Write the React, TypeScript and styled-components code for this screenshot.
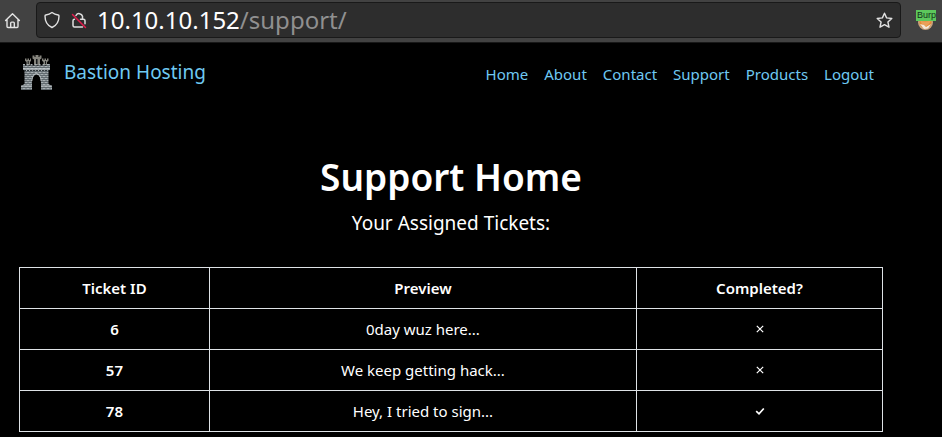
import React from "react";
import styled, { createGlobalStyle } from "styled-components";

const GlobalStyle = createGlobalStyle`
  * { box-sizing: border-box; }
  html, body { margin: 0; background: #000; }
  body {
    color: #fff;
    font-family: "Noto Sans", "Open Sans", sans-serif;
    font-size: 15px;
    line-height: 24px;
    overflow: hidden;
  }
`;

const Toolbar = styled.div`
  display: flex;
  align-items: center;
  height: 43px;
  padding: 0 5px 2px 4px;
  background: #424242;
  border-bottom: 1px solid #181818;
`;

const IconButton = styled.button`
  display: flex;
  padding: 0;
  border: 0;
  background: none;
  color: #e4e4e4;
`;

const AddressBar = styled.div`
  display: flex;
  flex: 1;
  align-items: center;
  gap: 11px;
  height: 36px;
  margin: 0 14px 0 15px;
  padding: 0 7px;
  border: 1px solid #191919;
  border-radius: 4px;
  background: #2d2d2d;
`;

const Address = styled.div`
  flex: 1;
  margin-left: -1px;
  font-size: 24px;
  line-height: 32px;
  color: #909090;
`;

const Host = styled.span`
  color: #fff;
`;

const Extension = styled.button`
  position: relative;
  width: 22px;
  height: 24px;
  padding: 0;
  border: 0;
  background: none;
`;

const FoxArt = styled.svg`
  position: absolute;
  left: 2px;
  top: 7px;
`;

const ExtensionLabel = styled.span`
  position: absolute;
  inset: 2px 1px auto 1px;
  height: 11px;
  padding-left: 1px;
  background: #5cc85c;
  color: #14301a;
  font: 9px/11px "Liberation Sans", sans-serif;
  text-align: left;
`;

const Page = styled.div`
  padding: 0 59px 5px 19px;
`;

const Header = styled.header`
  display: flex;
  align-items: center;
  justify-content: space-between;
  height: 58px;
  padding: 0 9px 0 0;
`;

const Brand = styled.a`
  display: flex;
  align-items: center;
  gap: 10px;
  color: #6fc9f2;
  font-size: 19px;
  text-decoration: none;
`;

const Nav = styled.nav`
  display: flex;
  gap: 16px;
  padding-top: 4px;
`;

const NavLink = styled.a`
  color: #6fc9f2;
  text-decoration: none;
`;

const Title = styled.h1`
  margin: 52px 0 8px;
  font-size: 37px;
  line-height: 48px;
  font-weight: 600;
  text-align: center;
`;

const Subtitle = styled.p`
  margin: 0 0 30px;
  font-size: 19px;
  line-height: 28px;
  text-align: center;
`;

const Table = styled.table`
  width: 100%;
  border-collapse: collapse;
  table-layout: fixed;
  text-align: center;
`;

const Column = styled.col<{ $share: number }>`
  width: ${({ $share }) => $share}%;
`;

const Cell = styled.td`
  height: 41px;
  padding: 8px;
  border: 1px solid #dee2e6;
`;

const HeadCell = styled.th`
  height: 41px;
  padding: 8px;
  border: 1px solid #dee2e6;
  font-weight: 600;
`;

const Mark = styled.svg`
  display: block;
  margin: 0 auto;
`;

const HomeIcon = () => (
  <svg width="17" height="17" viewBox="0 0 17 17" fill="none" stroke="currentColor" strokeWidth="1.4" strokeLinejoin="round" strokeLinecap="round">
    <path d="M1.6 8.4 8.5 1.7l6.900 6.700M3 7.200v7.300q0 1 1 1h9q1 0 1-1V7.200M6.700 15.300v-4.200q0-1 1-1h1.600q1 0 1 1v4.200" />
  </svg>
);

const ShieldIcon = () => (
  <svg width="16" height="18" viewBox="0 0 16 18" fill="none" stroke="#e2e2e2" strokeWidth="1.4" strokeLinejoin="round">
    <path d="M8 1.500c2 1.400 4 2.100 6.200 2.500.6.1.8.4.8.9 0 5.300-2 9.300-7 11.600C3 14.200 1 10.200 1 4.900c0-.5.2-.8.8-.9C4 3.600 6 2.900 8 1.500Z" />
  </svg>
);

const InsecureIcon = () => (
  <svg width="16" height="18" viewBox="0 0 16 18" fill="none" stroke="#dedede" strokeWidth="1.5" strokeLinecap="round">
    <path d="M5 4.500a3.500 3.500 0 0 1 6.500.8V8M9.500 8.200h3q1.500 0 1.500 1.500v3M3.500 8.200Q2 8.200 2 9.700v4.800Q2 16 3.500 16h8" />
    <path d="m1.500 3.500 13 13" stroke="#e01b4c" strokeWidth="1.500" />
  </svg>
);

const StarIcon = () => (
  <svg width="17" height="17" viewBox="0 0 17 17" fill="none" stroke="#e2e2e2" strokeWidth="1.4" strokeLinejoin="round">
    <path d="m8.500 1.200 2.100 4.700 5.200.6-3.900 3.500 1.100 5.200-4.500-2.600L4 15.200 5.100 10 1.200 6.500l5.200-.6Z" />
  </svg>
);

const Castle = () => (
  <svg width="35" height="37" viewBox="0 0 35 37" aria-hidden="true">
    <defs>
      <pattern id="bricks" width="4" height="4" patternUnits="userSpaceOnUse">
        <rect width="4" height="4" fill="#a9b0b3" />
        <path d="M0 1.500h4M0 3.500h4M1 0v1.500M3 1.500v2" stroke="#495157" strokeWidth=".7" />
      </pattern>
    </defs>
    <path fill="#85847d" d="M13.500 1.500h2v1.500h1V1h3v2h1V1.500h2v3l-1.500 1V11h-6V5.500l-1.500-1ZM6 4.500h1.500V6h1V4.500h1.500V6h1V4.500H12v2.300L11 8v3H7.500V8L6 6.800ZM23 4.500h1.500V6h1V4.500H27V6h1V4.500h1.500v2.300L28 8v3h-3.500V8L23 6.800Z" />
    <path d="M17 5h1.500v5H17ZM8.700 7h1v3h-1ZM26 7h1v3h-1Z" fill="#171a1c" />
    <path fill="url(#bricks)" d="M4 10h2v1.500h1.500V10h2v1.500h2V10h2v1.500h2V10h2v1.500h2V10h2v1.500h2V10h2v1.500h2V10h2v1.500H29V10h2v5l-1.500 2v13l3.500 2v4H22v-7c0-11-9-11-9 0v7H2v-4l3.500-2V17L4 15Z" />
    <path d="M4 15h27" stroke="#d4dadd" strokeWidth="1" />
    <path d="M2 32h11M22 32h11M12.800 27c1-10 8.400-10 9.400 0" fill="none" stroke="#c0c6c9" strokeWidth=".8" />
    <path d="M5 16.500h25" stroke="#30373b" strokeWidth="1" strokeDasharray="2 1" />
  </svg>
);

const StatusMark = ({ done }: { done: boolean }) => (
  <Mark width="10" height="10" viewBox="0 0 10 10" fill="none" stroke="#fff" strokeWidth={done ? 1.7 : 1.2} role="img" aria-label={done ? "Yes" : "No"}>
    <path d={done ? "M1.200 5.200 4 7.800l4.800-5.300" : "m1.800 1.800 6.400 6.400m0-6.400-6.400 6.400"} />
  </Mark>
);

const links = ["Home", "About", "Contact", "Support", "Products", "Logout"];

const tickets = [
  { id: 6, preview: "0day wuz here...", done: false },
  { id: 57, preview: "We keep getting hack...", done: false },
  { id: 78, preview: "Hey, I tried to sign...", done: true },
];

export default function App() {
  return (
    <>
      <GlobalStyle />
      <Toolbar>
        <IconButton aria-label="Home page"><HomeIcon /></IconButton>
        <AddressBar>
          <IconButton aria-label="Tracking protection"><ShieldIcon /></IconButton>
          <IconButton aria-label="Connection is not secure"><InsecureIcon /></IconButton>
          <Address><Host>10.10.10.152</Host>/support/</Address>
          <IconButton aria-label="Bookmark this page"><StarIcon /></IconButton>
        </AddressBar>
        <Extension aria-label="Proxy profile">
          <FoxArt width="17" height="16" viewBox="0 0 17 16">
            <circle cx="8.500" cy="7.500" r="7.500" fill="#c9a27c" />
            <circle cx="8.500" cy="7" r="6" fill="#e58a32" />
            <path d="M3 5.500q5 2 11 0l-2 3.500-3 2.500L5 9Z" fill="#e9a05a" />
            <path d="m3 9 4 1 2 2 5-3-3 4.500-4 .500Z" fill="#f4e8da" />
          </FoxArt>
          <ExtensionLabel>Burp</ExtensionLabel>
        </Extension>
      </Toolbar>
      <Page>
        <Header>
          <Brand href="#"><Castle />Bastion Hosting</Brand>
          <Nav>
            {links.map((link) => <NavLink href="#" key={link}>{link}</NavLink>)}
          </Nav>
        </Header>
        <main>
          <Title>Support Home</Title>
          <Subtitle>Your Assigned Tickets:</Subtitle>
          <Table>
            <colgroup>
              <Column $share={22} />
              <Column $share={49.5} />
              <Column $share={28.5} />
            </colgroup>
            <thead>
              <tr>
                <HeadCell scope="col">Ticket ID</HeadCell>
                <HeadCell scope="col">Preview</HeadCell>
                <HeadCell scope="col">Completed?</HeadCell>
              </tr>
            </thead>
            <tbody>
              {tickets.map((ticket) => (
                <tr key={ticket.id}>
                  <HeadCell scope="row">{ticket.id}</HeadCell>
                  <Cell>{ticket.preview}</Cell>
                  <Cell><StatusMark done={ticket.done} /></Cell>
                </tr>
              ))}
            </tbody>
          </Table>
        </main>
      </Page>
    </>
  );
}
